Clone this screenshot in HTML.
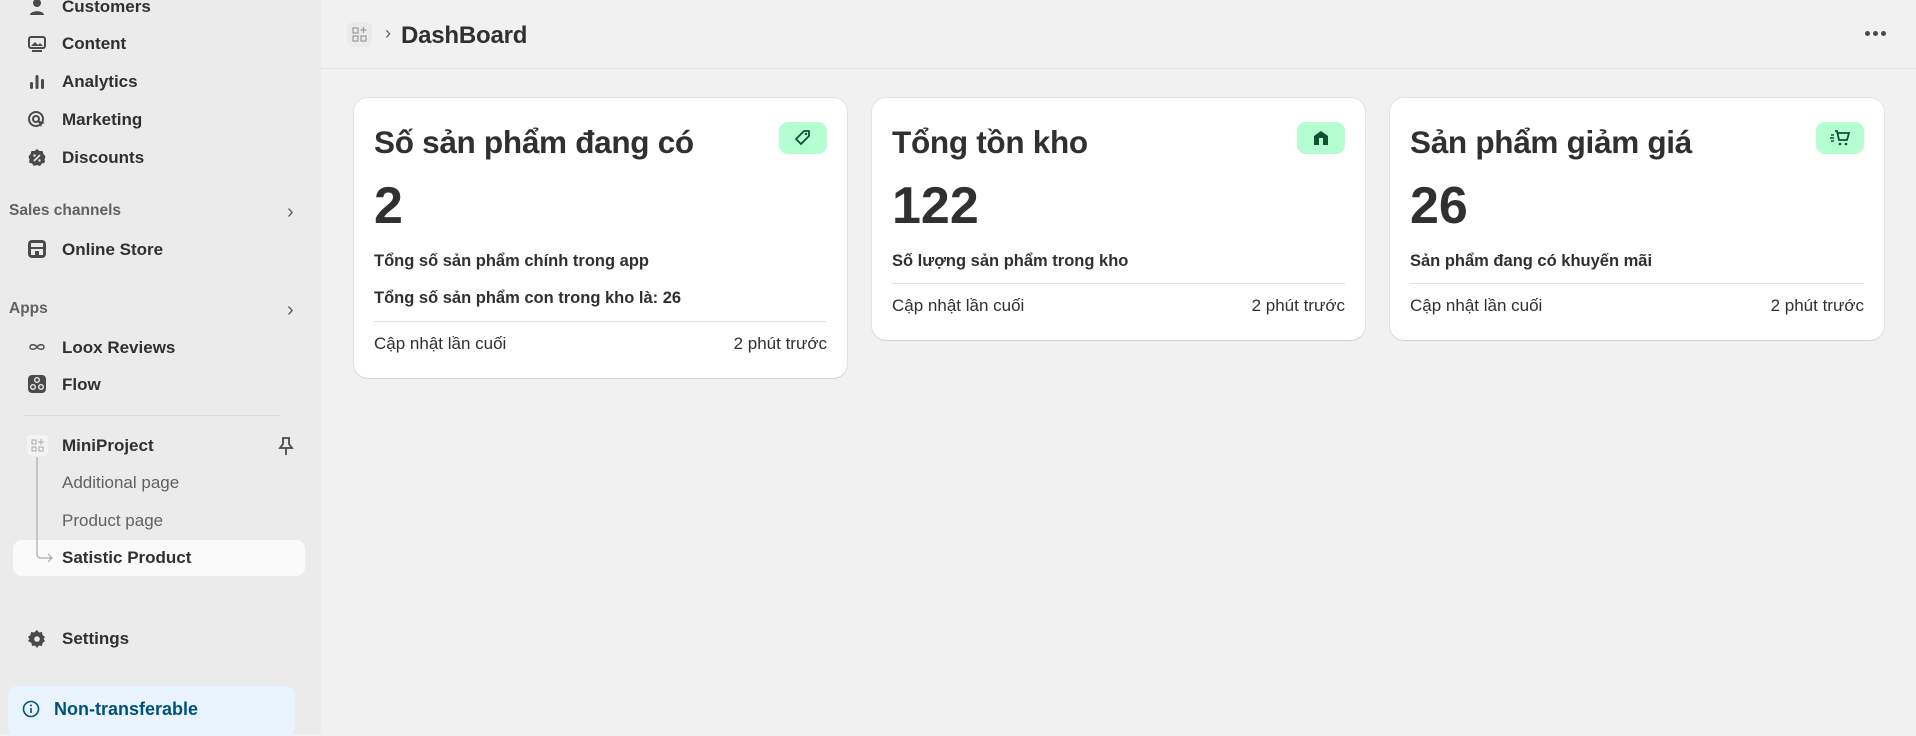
<!DOCTYPE html>
<html><head><meta charset="utf-8"><style>
*{box-sizing:border-box;margin:0;padding:0}
body{width:1916px;height:734px;overflow:hidden;background:#f1f1f1;font-family:"Liberation Sans",sans-serif;color:#303030;position:relative}
div{white-space:nowrap}
.sb{position:absolute;left:0;top:0;width:321px;height:734px;background:#ebebeb}
.it{position:absolute;left:62px;font-size:17px;font-weight:700;color:#303030;line-height:20px}
.ic{position:absolute;left:27px;width:20px;height:20px}
.sec{position:absolute;left:9px;font-size:15.5px;font-weight:700;color:#616161}
.chev{position:absolute;left:287px;font-size:20px;color:#616161}
.sub{position:absolute;left:62px;font-size:17px;color:#616161;line-height:20px}
.main{position:absolute;left:321px;top:0;right:0;height:69px;border-bottom:1px solid #e3e3e3}
.card{position:absolute;top:98px;background:#fff;border-radius:14px;box-shadow:0 1px 0 #d4d4d4,0 0 0 1px #e3e3e3;padding:0 20px}
.card h2{position:absolute;left:20px;top:26px;font-size:31.5px;font-weight:700;color:#303030;letter-spacing:-0.3px}
.badge{position:absolute;right:20px;top:24px;width:48px;height:32px;border-radius:9px;background:#b4fed2;display:flex;align-items:center;justify-content:center}
.big{position:absolute;left:20px;top:78px;font-size:52px;font-weight:700;color:#303030}
.t{position:absolute;left:20px;font-size:16.5px;font-weight:700;color:#303030}
.hr{position:absolute;left:20px;right:20px;height:1px;background:#e3e3e3}
.f{position:absolute;left:20px;right:20px;font-size:17px;color:#303030;display:flex;justify-content:space-between}
</style></head><body>
<div class="sb">
<svg class="ic" style="top:-3px" viewBox="0 0 20 20"><circle cx="10" cy="6" r="4" fill="#4a4a4a"/><path d="M3 18c0-5 14-5 14 0z" fill="#4a4a4a"/></svg>
<div class="it" style="top:-3px">Customers</div>
<svg class="ic" style="top:34px" viewBox="0 0 20 20"><rect x="2" y="3" width="16" height="11" rx="2" fill="none" stroke="#4a4a4a" stroke-width="2"/><path d="M4 12l4-4 3 3 2-2 3 3z" fill="#4a4a4a"/><rect x="5" y="16" width="10" height="2" fill="#4a4a4a"/></svg>
<div class="it" style="top:34px">Content</div>
<svg class="ic" style="top:72px" viewBox="0 0 20 20"><rect x="3" y="10" width="3" height="7" rx="1.5" fill="#4a4a4a"/><rect x="8.5" y="3" width="3" height="14" rx="1.5" fill="#4a4a4a"/><rect x="14" y="7" width="3" height="10" rx="1.5" fill="#4a4a4a"/></svg>
<div class="it" style="top:72px">Analytics</div>
<svg class="ic" style="top:110px" viewBox="0 0 20 20"><circle cx="9" cy="9" r="7" fill="none" stroke="#4a4a4a" stroke-width="2"/><circle cx="9" cy="9" r="3" fill="none" stroke="#4a4a4a" stroke-width="2"/><path d="M10 10l8 3-3 1-1 3z" fill="#4a4a4a"/></svg>
<div class="it" style="top:110px">Marketing</div>
<svg class="ic" style="top:148px" viewBox="0 0 20 20"><path d="M10 1l2.5 2h3l1 3 2 2.5-1 3 .5 3-3 1-2 2.5-3-1-3 1-2-2.5-3-1 .5-3-1-3 2-2.5 1-3h3z" fill="#4a4a4a"/><path d="M7 13l6-6" stroke="#ebebeb" stroke-width="1.6"/><circle cx="7.5" cy="7.5" r="1.2" fill="#ebebeb"/><circle cx="12.5" cy="12.5" r="1.2" fill="#ebebeb"/></svg>
<div class="it" style="top:148px">Discounts</div>
<div class="sec" style="top:202px">Sales channels</div><div class="chev" style="top:201px">›</div>
<svg class="ic" style="top:239px" viewBox="0 0 20 20"><rect x="1" y="1" width="18" height="18" rx="4" fill="#4a4a4a"/><rect x="4" y="4" width="12" height="4" fill="#ebebeb"/><rect x="4" y="10" width="12" height="6" fill="#ebebeb"/><rect x="8" y="12" width="4" height="4" fill="#4a4a4a"/></svg>
<div class="it" style="top:240px">Online Store</div>
<div class="sec" style="top:300px">Apps</div><div class="chev" style="top:299px">›</div>
<svg class="ic" style="top:337px" viewBox="0 0 20 20"><path d="M10 10c-2-3-7-3-7 0s5 3 7 0 7-3 7 0-5 3-7 0" fill="none" stroke="#4a4a4a" stroke-width="1.4"/></svg>
<div class="it" style="top:338px">Loox Reviews</div>
<svg class="ic" style="top:374px" viewBox="0 0 20 20"><rect x="1" y="1" width="18" height="18" rx="4" fill="#4a4a4a"/><circle cx="10" cy="6" r="2.3" fill="none" stroke="#ebebeb" stroke-width="1.4"/><circle cx="6" cy="13" r="2.3" fill="none" stroke="#ebebeb" stroke-width="1.4"/><circle cx="14" cy="13" r="2.3" fill="none" stroke="#ebebeb" stroke-width="1.4"/></svg>
<div class="it" style="top:375px">Flow</div>
<div style="position:absolute;left:24px;top:415px;width:255px;height:1px;background:#dcdcdc"></div>
<div style="position:absolute;left:27px;top:435px;width:21px;height:21px;border-radius:4px;background:#f3f3f3"></div>
<svg style="position:absolute;left:31px;top:439px" width="13" height="13" viewBox="0 0 13 13"><rect x="1" y="1" width="4" height="4" fill="none" stroke="#aaa"/><rect x="1" y="8" width="4" height="4" fill="none" stroke="#aaa"/><rect x="8" y="8" width="4" height="4" fill="none" stroke="#aaa"/><path d="M10 0v6M7 3h6" stroke="#aaa"/></svg>
<div class="it" style="top:436px">MiniProject</div>
<svg style="position:absolute;left:277px;top:436px" width="18" height="20" viewBox="0 0 18 20"><path d="M5 2h8M6 2v6l-3 4h12l-3-4V2M9 12v7" fill="none" stroke="#4a4a4a" stroke-width="1.8"/></svg>
<div class="sub" style="top:473px">Additional page</div>
<div class="sub" style="top:511px">Product page</div>
<div style="position:absolute;left:13px;top:540px;width:292px;height:36px;border-radius:9px;background:#fafafa"></div>
<svg style="position:absolute;left:34px;top:457px" width="20" height="110" viewBox="0 0 20 110"><path d="M3 0v97q0 4 4 4h11M14 97l4 4-4 4" fill="none" stroke="#aaa" stroke-width="1.2"/></svg>
<div class="it" style="top:548px">Satistic Product</div>
<svg class="ic" style="top:629px" viewBox="0 0 20 20"><path d="M10 1l2 2.5 3-.5.5 3 2.5 2-1.5 2 1.5 2-2.5 2-.5 3-3-.5-2 2.5-2-2.5-3 .5-.5-3L1 12l1.5-2L1 8l2.5-2 .5-3 3 .5z" fill="#4a4a4a"/><circle cx="10" cy="10" r="2.8" fill="#ebebeb"/></svg>
<div class="it" style="top:629px">Settings</div>
<div style="position:absolute;left:8px;top:686px;width:287px;height:50px;border-radius:10px;background:#eaf4ff"></div>
<svg style="position:absolute;left:22px;top:700px" width="18" height="18" viewBox="0 0 18 18"><circle cx="9" cy="9" r="7.5" fill="none" stroke="#00527c" stroke-width="1.6"/><rect x="8.2" y="8" width="1.6" height="5" fill="#00527c"/><circle cx="9" cy="5.5" r="1" fill="#00527c"/></svg>
<div style="position:absolute;left:54px;top:699px;font-size:18px;font-weight:700;color:#00527c">Non-transferable</div>
</div>
<div class="main">
<div style="position:absolute;left:26px;top:22px;width:25px;height:25px;border-radius:6px;background:#ebebeb"></div>
<svg style="position:absolute;left:31px;top:27px" width="15" height="15" viewBox="0 0 15 15"><rect x="1" y="1" width="5" height="5" fill="none" stroke="#999" stroke-width="1.2"/><rect x="1" y="9" width="5" height="5" fill="none" stroke="#999" stroke-width="1.2"/><rect x="9" y="9" width="5" height="5" fill="none" stroke="#999" stroke-width="1.2"/><path d="M11.5 0v6M8.5 3h6" stroke="#999" stroke-width="1.2"/></svg>
<div style="position:absolute;left:64px;top:23px;font-size:18px;color:#616161">›</div>
<div style="position:absolute;left:80px;top:22px;font-size:24px;font-weight:700;color:#303030;letter-spacing:-0.2px">DashBoard</div>
<div style="position:absolute;right:30px;top:31px;display:flex;gap:3px"><i style="width:5px;height:5px;border-radius:50%;background:#4a4a4a"></i><i style="width:5px;height:5px;border-radius:50%;background:#4a4a4a"></i><i style="width:5px;height:5px;border-radius:50%;background:#4a4a4a"></i></div>
</div>

<div class="card" style="left:354px;width:493px;height:280px">
<h2>Số sản phẩm đang có</h2>
<div class="badge"><svg width="20" height="20" viewBox="0 0 20 20"><path d="M11 3h5v5l-8 8-5-5z" fill="none" stroke="#0c5132" stroke-width="1.8" stroke-linejoin="round"/><circle cx="13" cy="6" r="1.2" fill="#0c5132"/></svg></div>
<div class="big">2</div>
<div class="t" style="top:154px">Tổng số sản phẩm chính trong app</div>
<div class="t" style="top:191px">Tổng số sản phẩm con trong kho là: 26</div>
<div class="hr" style="top:223px"></div>
<div class="f" style="top:236px"><span>Cập nhật lần cuối</span><span>2 phút trước</span></div>
</div>

<div class="card" style="left:872px;width:493px;height:242px">
<h2>Tổng tồn kho</h2>
<div class="badge"><svg width="20" height="20" viewBox="0 0 20 20"><path d="M3 8l7-5 7 5v9H3z" fill="#0c5132"/><rect x="8" y="10" width="4" height="7" fill="#b4fed2"/></svg></div>
<div class="big">122</div>
<div class="t" style="top:154px">Số lượng sản phẩm trong kho</div>
<div class="hr" style="top:185px"></div>
<div class="f" style="top:198px"><span>Cập nhật lần cuối</span><span>2 phút trước</span></div>
</div>

<div class="card" style="left:1390px;width:494px;height:242px">
<h2>Sản phẩm giảm giá</h2>
<div class="badge"><svg width="22" height="20" viewBox="0 0 22 20"><path d="M6 3h2l2 9h8l2-7H9" fill="none" stroke="#0c5132" stroke-width="1.8"/><circle cx="11" cy="16" r="1.3" fill="#0c5132"/><circle cx="17" cy="16" r="1.3" fill="#0c5132"/><path d="M2 7h3M1 10h4M2 13h3" stroke="#0c5132" stroke-width="1.5"/></svg></div>
<div class="big">26</div>
<div class="t" style="top:154px">Sản phẩm đang có khuyến mãi</div>
<div class="hr" style="top:185px"></div>
<div class="f" style="top:198px"><span>Cập nhật lần cuối</span><span>2 phút trước</span></div>
</div>
</body></html>
